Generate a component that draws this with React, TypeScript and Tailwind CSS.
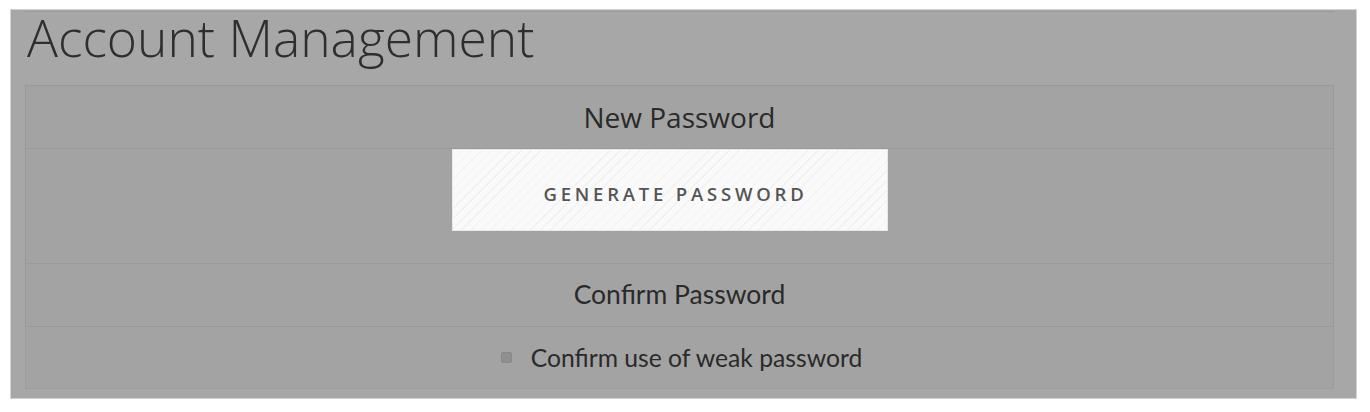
import { useState } from 'react';

export default function App() {
  const [weak, setWeak] = useState(false);

  return (
    <div className="w-[1370px] h-[412px] bg-white pt-[9px] pl-[10px]">
      <section className="w-[1347px] h-[390px] border border-[#d2d2d2] bg-[#a7a7a7] pl-[14px] pr-[22px] flex flex-col">
        <div className="h-px bg-[#9a9a9a] mt-[1px]" />
        <h1 className="h-[73px] font-['Open_Sans'] font-light text-[51.5px] leading-[50px] text-[#2e2e2e] ml-[2px]">
          Account Management
        </h1>

        <div className="flex flex-col">
          <div className="h-[64px] border border-[#999] bg-[#a3a3a3] flex items-center justify-center">
            <span className="font-['Open_Sans'] text-[28px] text-[#2a2a2a]">New Password</span>
          </div>

          <div className="h-[114px] border-x border-[#999] bg-[#a3a3a3] flex justify-center">
            <button
              type="button"
              className="mr-[20px] pl-[12px] pt-[8px] w-[436px] h-[82px] border border-[#e8e8e8] bg-[#fafafa] bg-[repeating-linear-gradient(135deg,#fafafa_0px,#fafafa_6px,#f1f1f1_6px,#f1f1f1_7px)] font-['Open_Sans'] font-semibold text-[18.5px] tracking-[3.8px] text-[#555]"
            >
              GENERATE PASSWORD
            </button>
          </div>

          <div className="h-[64px] border border-[#999] bg-[#a3a3a3] flex items-center justify-center">
            <span className="font-['Lato'] text-[26.5px] text-[#2a2a2a]">Confirm Password</span>
          </div>

          <div className="h-[62px] border-x border-b border-[#9d9d9d] bg-[#a3a3a3] flex items-center justify-center gap-[19px] pl-[4px]">
            <input
              type="checkbox"
              checked={weak}
              onChange={(e) => setWeak(e.target.checked)}
              className="appearance-none w-[11px] h-[11px] rounded-[2px] bg-[#8f8f8f] border border-[#888]"
            />
            <span className="font-['Lato'] text-[24.7px] text-[#2a2a2a]">Confirm use of weak password</span>
          </div>
        </div>
      </section>
    </div>
  );
}
